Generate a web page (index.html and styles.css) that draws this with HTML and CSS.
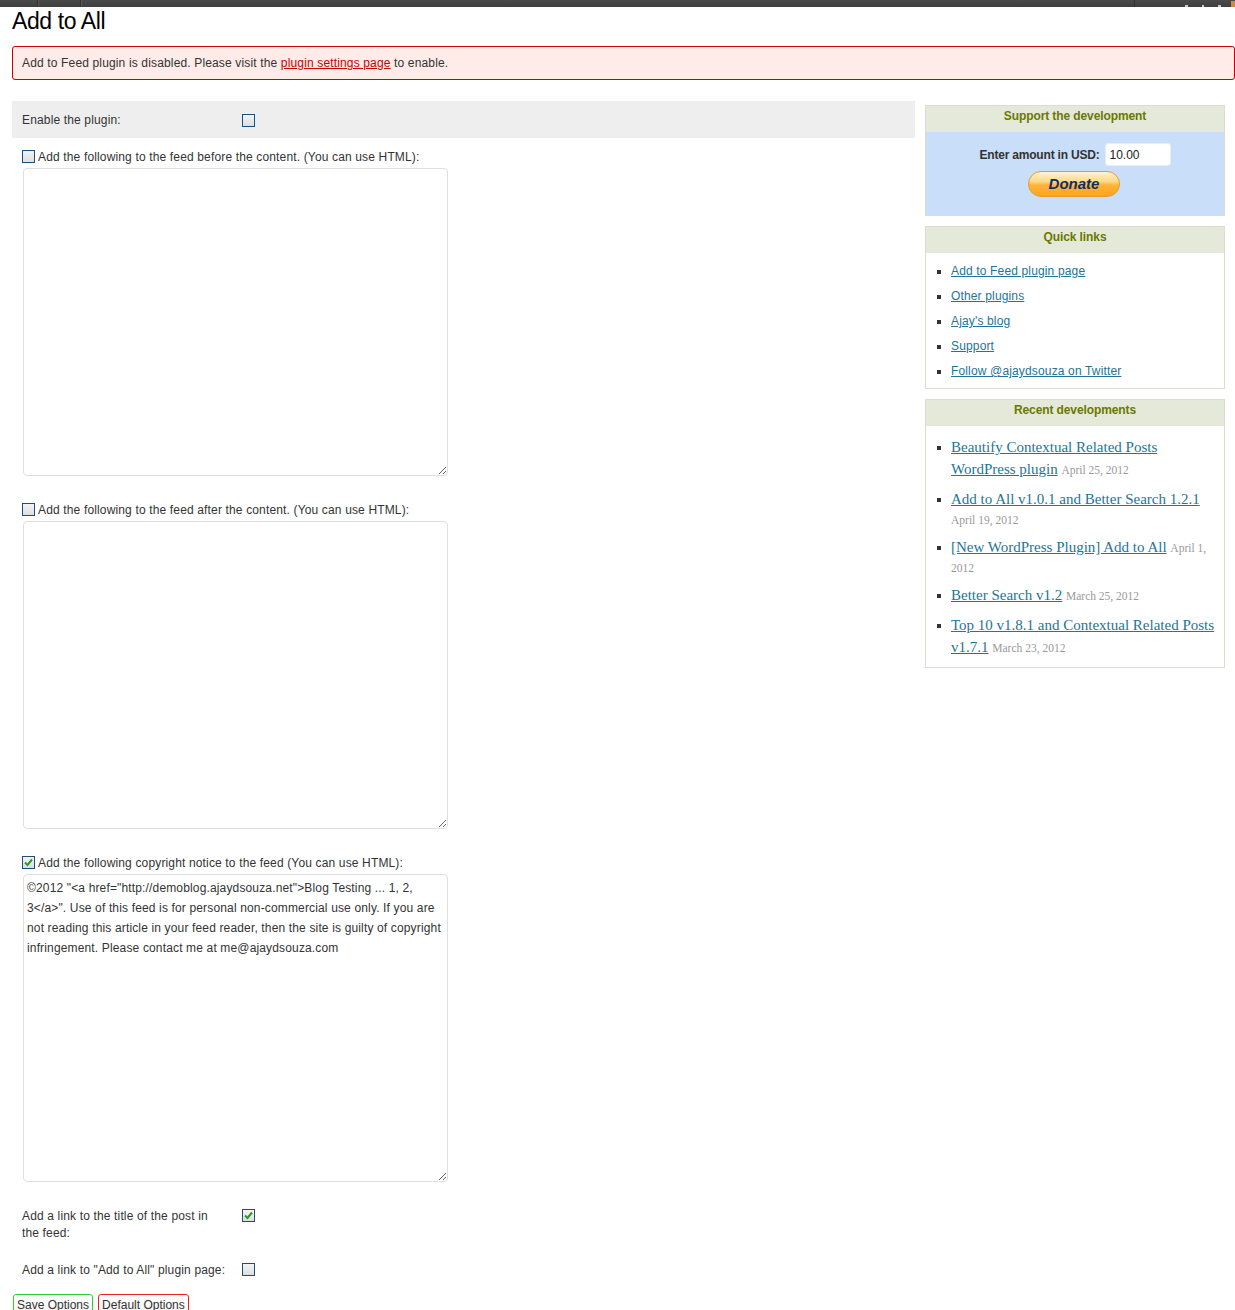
FILE: index.html
```html
<!DOCTYPE html>
<html>
<head>
<meta charset="utf-8">
<title>Add to All</title>
<link rel="stylesheet" href="styles.css">
</head>
<body>
<div class="adminbar">
  <span class="seg seg-a"></span>
  <span class="seg seg-b"></span>
  <span class="bar-fill"></span>
  <span class="seg seg-right"><i class="dot"></i><i class="dot"></i><i class="dot"></i><i class="avatar"></i></span>
</div>
<div class="wrap">
  <h2 class="title">Add to All</h2>
  <div class="error">Add to Feed plugin is disabled. Please visit the <a href="#">plugin settings page</a> to enable.</div>
  <div class="columns">
    <form class="main">
      <div class="opt shaded">
        <span class="th">Enable the plugin:</span>
        <span class="cb"></span>
      </div>
      <div class="block first">
        <div class="block-head"><span class="cb"></span><span>Add the following to the feed before the content. (You can use HTML):</span></div>
        <textarea class="ta"></textarea>
      </div>
      <div class="block">
        <div class="block-head"><span class="cb"></span><span>Add the following to the feed after the content. (You can use HTML):</span></div>
        <textarea class="ta"></textarea>
      </div>
      <div class="block">
        <div class="block-head"><span class="cb on"><svg viewBox="0 0 11 11" width="11" height="11"><path d="M2 5.5 L4.5 8 L9 2.5" stroke="#2a9a2a" stroke-width="2" fill="none"/></svg></span><span>Add the following copyright notice to the feed (You can use HTML):</span></div>
        <textarea class="ta">©2012 "&lt;a href="http://demoblog.ajaydsouza.net"&gt;Blog Testing ... 1, 2, 3&lt;/a&gt;". Use of this feed is for personal non-commercial use only. If you are not reading this article in your feed reader, then the site is guilty of copyright infringement. Please contact me at me@ajaydsouza.com</textarea>
      </div>
      <div class="opt opt-first">
        <span class="th">Add a link to the title of the post in the feed:</span>
        <span class="cb on"><svg viewBox="0 0 11 11" width="11" height="11"><path d="M2 5.5 L4.5 8 L9 2.5" stroke="#2a9a2a" stroke-width="2" fill="none"/></svg></span>
      </div>
      <div class="opt">
        <span class="th">Add a link to "Add to All" plugin page:</span>
        <span class="cb"></span>
      </div>
      <div class="buttons">
        <button type="button" class="btn save">Save Options</button>
        <button type="button" class="btn reset">Default Options</button>
      </div>
    </form>
    <aside class="sidebar">
      <div class="box">
        <h3 class="box-title">Support the development</h3>
        <div class="box-body donate-body">
          <div class="amount"><span class="amount-label">Enter amount in USD:</span><input class="amount-input" type="text" value="10.00"></div>
          <button type="button" class="donate">Donate</button>
        </div>
      </div>
      <div class="box">
        <h3 class="box-title">Quick links</h3>
        <div class="box-body">
          <ul class="links">
            <li><a href="#">Add to Feed plugin page</a></li>
            <li><a href="#">Other plugins</a></li>
            <li><a href="#">Ajay's blog</a></li>
            <li><a href="#">Support</a></li>
            <li><a href="#">Follow @ajaydsouza on Twitter</a></li>
          </ul>
        </div>
      </div>
      <div class="box">
        <h3 class="box-title">Recent developments</h3>
        <div class="box-body">
          <ul class="news">
            <li><a href="#">Beautify Contextual Related Posts WordPress plugin</a> <span class="date">April 25, 2012</span></li>
            <li><a href="#">Add to All v1.0.1 and Better Search 1.2.1</a> <span class="date">April 19, 2012</span></li>
            <li><a href="#">[New WordPress Plugin] Add to All</a> <span class="date">April 1, 2012</span></li>
            <li><a href="#">Better Search v1.2</a> <span class="date">March 25, 2012</span></li>
            <li><a href="#">Top 10 v1.8.1 and Contextual Related Posts v1.7.1</a> <span class="date">March 23, 2012</span></li>
          </ul>
        </div>
      </div>
    </aside>
  </div>
</div>
</body>
</html>
```
FILE: styles.css
```css
html, body {
  margin: 0;
  padding: 0;
  background: #fff;
}
body {
  font-family: "Liberation Sans", Arial, sans-serif;
  font-size: 12px;
  letter-spacing: 0.15px;
  color: #333;
}
a { color: #21759b; }

.adminbar {
  display: flex;
  height: 7px;
  background: linear-gradient(#4a4a4a, #3e3e3e);
}
.seg { display: block; height: 7px; }
.seg-a { width: 37px; border-right: 1px solid #2f2f2f; box-shadow: 1px 0 0 #5a5a5a; }
.seg-b { width: 42px; border-right: 1px solid #2f2f2f; box-shadow: 1px 0 0 #5a5a5a; }
.bar-fill { flex: 1; }
.seg-right {
  width: 101px;
  border-left: 1px solid #2f2f2f;
  display: flex;
  align-items: flex-end;
  gap: 14px;
  padding-left: 50px;
  box-sizing: border-box;
}
.dot { display: block; width: 3px; height: 2px; background: #cfcfcf; }
.avatar { display: block; width: 5px; height: 6px; background: #c98a52; margin-left: -4px; }

.wrap {
  padding-left: 12px;
}
.title {
  margin: 0;
  font-family: "Liberation Sans", Arial, sans-serif;
  font-weight: normal;
  font-size: 23px;
  letter-spacing: -0.4px;
  line-height: 29px;
  color: #000;
}
.error {
  margin-top: 10px;
  background: #ffebe8;
  border: 1px solid #c00;
  border-radius: 3px;
  padding: 9px 9px;
  line-height: 14px;
  color: #333;
}
.error a { color: #c00; }

.columns {
  display: flex;
  gap: 10px;
  padding-right: 10px;
  margin-top: 21px;
  align-items: flex-start;
}
.main {
  flex: 1;
  margin: 0;
}

.cb {
  display: flex;
  align-items: center;
  justify-content: center;
  width: 13px;
  height: 13px;
  box-sizing: border-box;
  border: 1px solid #1d4f7c;
  background: linear-gradient(#f4f4f4, #dedede);
  flex: none;
}
.cb svg { display: block; }

.opt {
  display: flex;
  align-items: flex-start;
  padding: 10px 0 10px 10px;
  line-height: 17px;
}
.opt .th {
  width: 205px;
  padding-right: 15px;
}
.opt .cb { margin-top: 1px; }
.opt.shaded {
  background: #eeeeee;
  align-items: center;
  height: 37px;
  padding-top: 1px;
  padding-bottom: 0;
  box-sizing: border-box;
}
.opt.shaded .cb { margin-top: 0; }
.opt-first { margin-top: 16px; }

.block {
  padding: 0 10px;
  margin-top: 27px;
}
.block.first { margin-top: 12px; }
.block-head {
  display: flex;
  align-items: center;
  gap: 3px;
  height: 13px;
  line-height: 14px;
}
.ta {
  display: block;
  margin: 5px 0 0 1px;
  width: 425px;
  height: 308px;
  box-sizing: border-box;
  border: 1px solid #dfdfdf;
  border-radius: 4px;
  padding: 3px 3px;
  font-family: "Liberation Sans", Arial, sans-serif;
  font-size: 12px;
  letter-spacing: 0.15px;
  line-height: 20px;
  color: #333;
  background: #fff;
  outline: none;
}

.buttons {
  display: flex;
  gap: 5px;
  margin: 5px 0 0 1px;
  padding-bottom: 20px;
}
.btn {
  font-family: "Liberation Sans", Arial, sans-serif;
  font-size: 12px;
  letter-spacing: 0;
  line-height: 14px;
  color: #333;
  background: linear-gradient(#ffffff, #f2f2f2);
  border-radius: 3px;
  padding: 3px 3px;
  margin: 0;
  height: 22px;
}
.btn.save { border: 1px solid #33cc33; }
.btn.reset { border: 1px solid #e22; }

.sidebar {
  width: 300px;
  flex: none;
  margin-top: 4px;
}
.box {
  border: 1px solid #dfdbd2;
  margin-bottom: 10px;
  background: #fff;
}
.box-title {
  margin: 0;
  background: #e5e9da;
  color: #6b7800;
  font-size: 12px;
  font-weight: bold;
  letter-spacing: -0.1px;
  line-height: 12px;
  text-align: center;
  padding: 4px 9px 10px;
}
.donate-body {
  background: #c9def8;
  height: 83px;
  box-sizing: border-box;
  padding-top: 11px;
  text-align: center;
}
.amount {
  display: flex;
  justify-content: center;
  align-items: center;
  gap: 5px;
}
.amount-label {
  font-weight: bold;
  letter-spacing: -0.2px;
  color: #333;
}
.amount-input {
  width: 66px;
  height: 23px;
  box-sizing: border-box;
  border: 1px solid #e4ecf6;
  border-radius: 3px;
  padding: 0 4px;
  font-family: "Liberation Sans", Arial, sans-serif;
  font-size: 12px;
  color: #222;
  background: #fff;
  outline: none;
}
.donate {
  display: block;
  margin: 5px auto 0;
  width: 92px;
  height: 26px;
  padding: 0;
  border: 1px solid #e79c2a;
  border-radius: 13px;
  background: linear-gradient(#fff3d6 0%, #ffd884 40%, #ffb339 55%, #ffa51b 100%);
  color: #0d2f68;
  font-family: "Liberation Sans", Arial, sans-serif;
  font-size: 15px;
  font-weight: bold;
  font-style: italic;
  letter-spacing: 0;
  line-height: 24px;
  position: relative;
  left: -1px;
}

.links {
  list-style: none;
  margin: 0;
  padding: 9px 4px 1px 11px;
}
.links li {
  position: relative;
  padding-left: 14px;
  line-height: 19px;
  margin-bottom: 6px;
}
.links li::before, .news li::before {
  content: "";
  position: absolute;
  left: 0;
  width: 4px;
  height: 4px;
  background: #333;
}
.links li::before { top: 8px; }

.news {
  list-style: none;
  margin: 0;
  padding: 10px 4px 1px 11px;
}
.news li {
  position: relative;
  padding-left: 14px;
  font-size: 15px;
  line-height: 18px;
  margin-bottom: 8px;
  letter-spacing: 0;
  font-family: "Liberation Serif", "Times New Roman", serif;
}
.news li::before { top: 10px; }
.news a {
  line-height: 22px;
}
.news .date {
  font-size: 11.5px;
  line-height: 1;
  color: #999;
}
```
